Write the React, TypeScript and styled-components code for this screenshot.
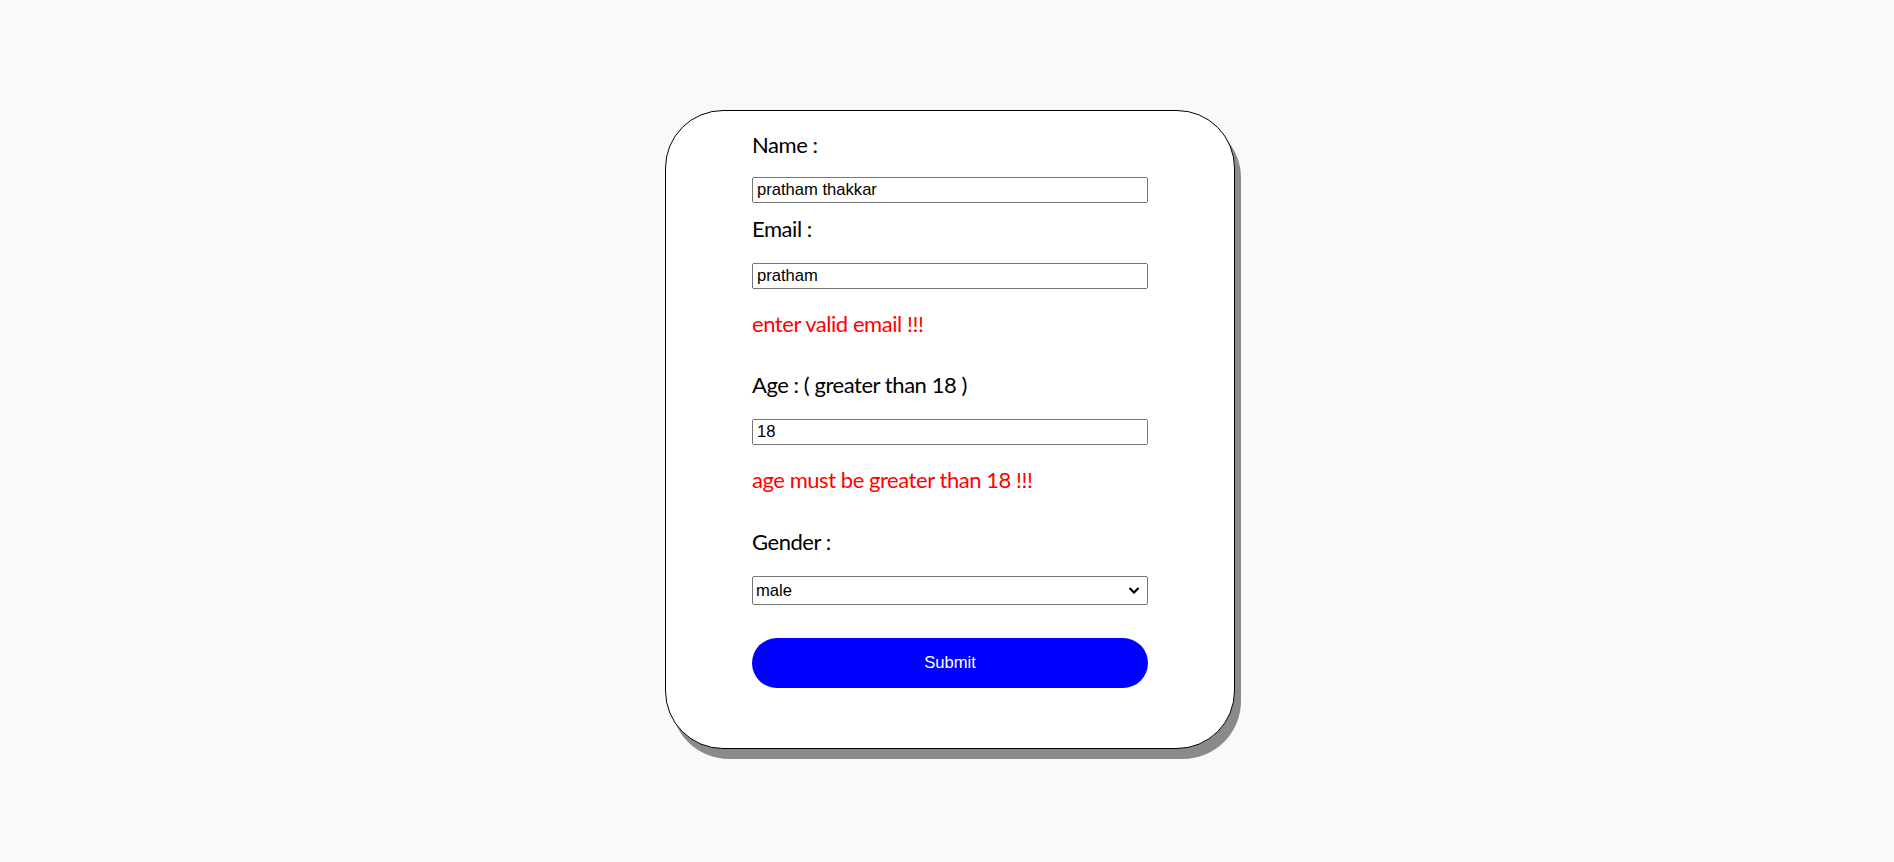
import React, { useState } from "react";
import styled, { createGlobalStyle } from "styled-components";

const GlobalStyle = createGlobalStyle`
  html, body {
    margin: 0;
    padding: 0;
    background: #f9f9f9;
  }
`;

const Page = styled.div`
  display: flex;
  justify-content: center;
  padding: 110px 0 0 6px;
  min-height: 862px;
  box-sizing: border-box;
`;

const Card = styled.form`
  width: 570px;
  box-sizing: border-box;
  background: #ffffff;
  border: 1px solid #000000;
  border-radius: 58px;
  box-shadow: 6px 10px 0 #8a8a8a;
  padding: 21px 86px 60px;
  display: flex;
  flex-direction: column;
  align-self: flex-start;
`;

const Label = styled.label<{ top: number }>`
  font-family: "Lato", "Open Sans", sans-serif;
  font-size: 22px;
  line-height: 26px;
  letter-spacing: -0.45px;
  color: #000000;
  margin-top: ${({ top }) => top}px;
`;

const ErrorText = styled.p<{ top: number }>`
  font-family: "Lato", "Open Sans", sans-serif;
  font-size: 22px;
  line-height: 26px;
  letter-spacing: -0.45px;
  color: #ff0000;
  margin: ${({ top }) => top}px 0 0;
`;

const TextInput = styled.input<{ top?: number }>`
  font-family: "Liberation Sans", Arial, sans-serif;
  font-size: 16.6px;
  width: 396px;
  height: 26px;
  box-sizing: border-box;
  margin-top: ${({ top }) => top ?? 21}px;
  padding: 1px 3px;
`;

const SelectWrap = styled.div`
  position: relative;
  margin-top: 21px;
  width: 396px;
  height: 29px;
`;

const Select = styled.select`
  appearance: none;
  -webkit-appearance: none;
  font-family: "Liberation Sans", Arial, sans-serif;
  font-size: 16.6px;
  width: 100%;
  height: 100%;
  box-sizing: border-box;
  margin: 0;
  padding: 0 24px 0 3px;
  color: #000000;
  background: #ffffff;
  border: 1px solid #767676;
  border-radius: 2px;
`;

const Chevron = styled.svg`
  position: absolute;
  right: 8px;
  top: 10px;
  width: 12px;
  height: 9px;
  pointer-events: none;
`;

const SubmitButton = styled.button`
  margin-top: 33px;
  width: 396px;
  height: 50px;
  border: none;
  border-radius: 25px;
  background: #0000ff;
  color: #ffffff;
  font-family: "Liberation Sans", Arial, sans-serif;
  font-size: 16.6px;
  cursor: pointer;
`;

export default function App() {
  const [name, setName] = useState("pratham thakkar");
  const [email, setEmail] = useState("pratham");
  const [age, setAge] = useState("18");
  const [gender, setGender] = useState("male");

  const emailValid = /^[^\s@]+@[^\s@]+\.[^\s@]+$/.test(email);
  const ageValid = Number(age) > 18;

  return (
    <>
      <GlobalStyle />
      <Page>
        <Card onSubmit={(e) => e.preventDefault()}>
          <Label top={0}>Name :</Label>
          <TextInput
            top={19}
            value={name}
            onChange={(e) => setName(e.target.value)}
          />

          <Label top={13}>Email :</Label>
          <TextInput value={email} onChange={(e) => setEmail(e.target.value)} />
          {!emailValid && <ErrorText top={22}>enter valid email !!!</ErrorText>}

          <Label top={35}>Age : ( greater than 18 )</Label>
          <TextInput value={age} onChange={(e) => setAge(e.target.value)} />
          {!ageValid && (
            <ErrorText top={22}>age must be greater than 18 !!!</ErrorText>
          )}

          <Label top={36}>Gender :</Label>
          <SelectWrap>
            <Select value={gender} onChange={(e) => setGender(e.target.value)}>
              <option value="male">male</option>
              <option value="female">female</option>
              <option value="other">other</option>
            </Select>
            <Chevron viewBox="0 0 12 9">
              <path
                d="M1.5 2 L6 6.5 L10.5 2"
                fill="none"
                stroke="#000"
                strokeWidth="2.2"
              />
            </Chevron>
          </SelectWrap>

          <SubmitButton type="submit">Submit</SubmitButton>
        </Card>
      </Page>
    </>
  );
}
